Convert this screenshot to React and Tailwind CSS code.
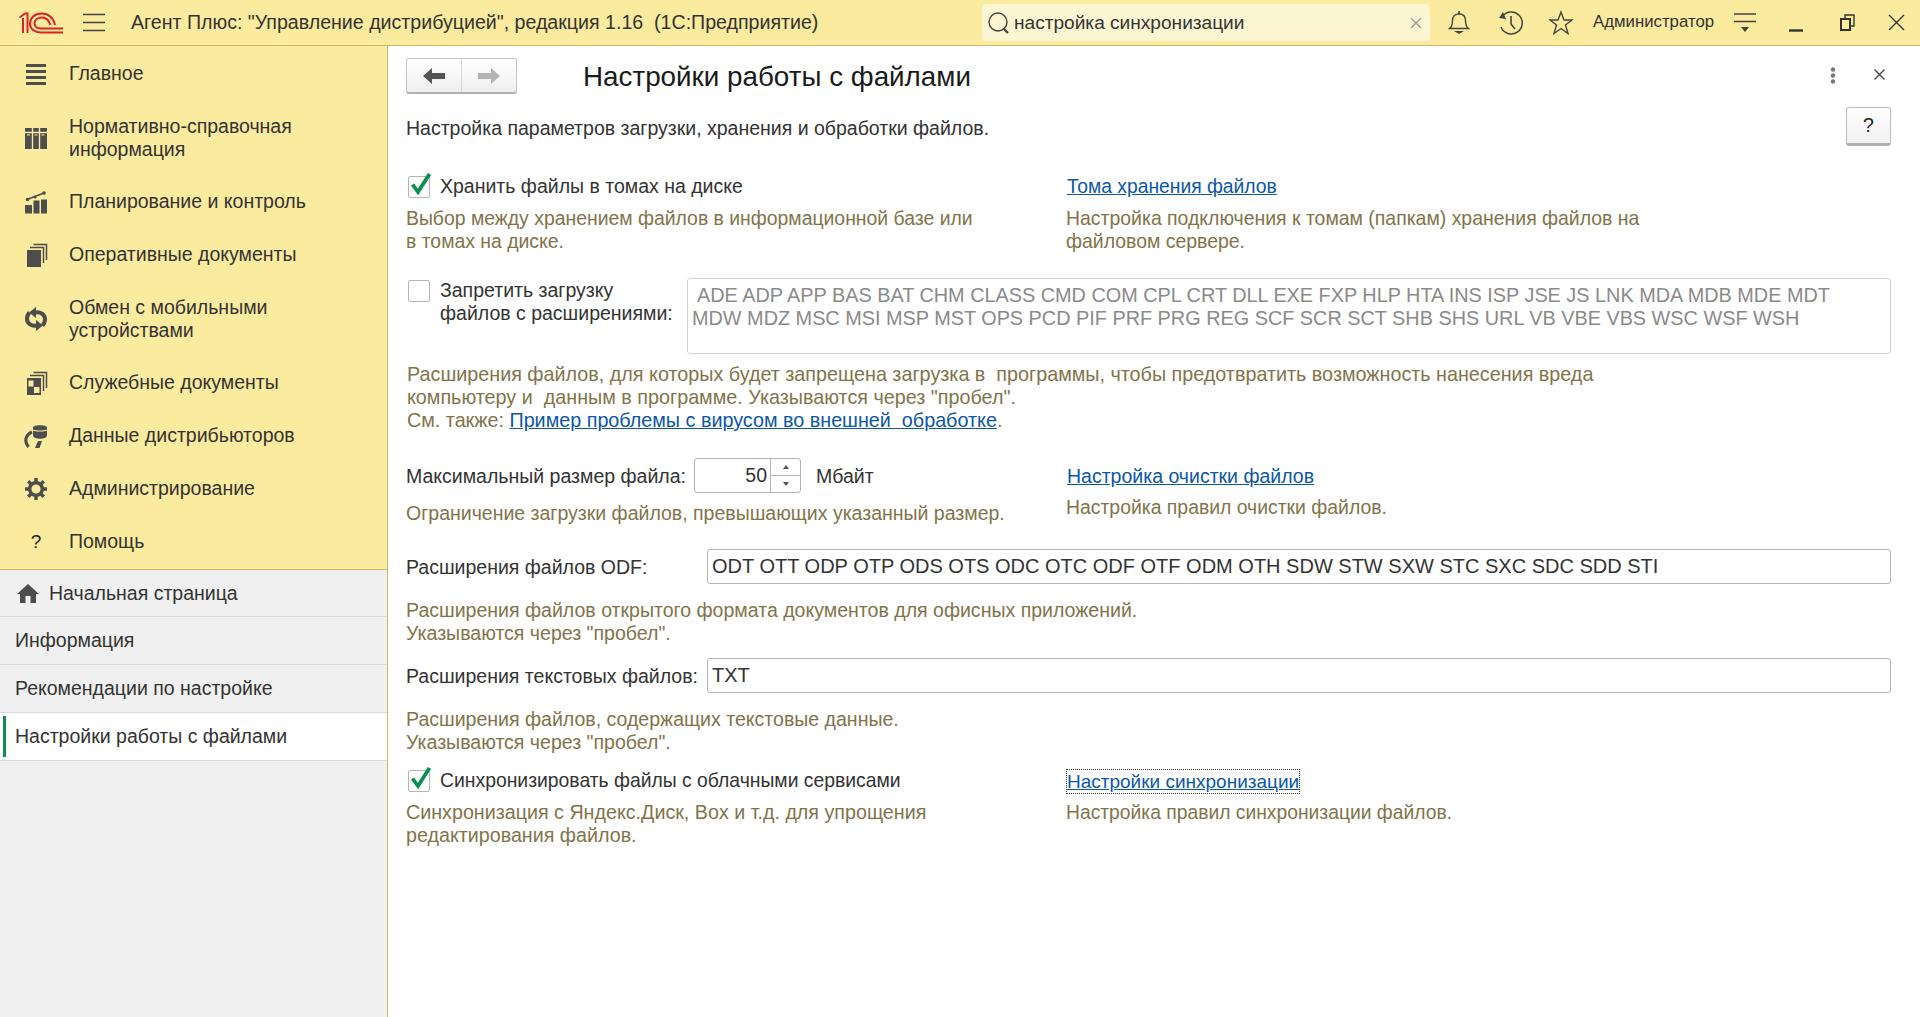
import React from "react";

const hintC = "text-[#81744a] leading-[23px]";
const hint = `${hintC} text-[19.4px]`;
const link = "text-[#0b57a8] underline";

function Check({ on }) {
  return (
    <div className="relative w-[22px] h-[22px] shrink-0 ml-[2px] mr-[10px] border border-[#b5b5b5] rounded-[2px] bg-white">
      {on && (
        <svg className="absolute -top-[4px] left-[1px]" width="24" height="24" viewBox="0 0 24 24">
          <path d="M2.500 11.500 L8 19 L19.500 1" fill="none" stroke="#0a8f4f" strokeWidth="3.800" />
        </svg>
      )}
    </div>
  );
}

const I = ({ children, w = 24, h = 24, c = "" }) => (
  <svg width={w} height={h} viewBox={`0 0 ${w} ${h}`} className={c} fill="none">
    {children}
  </svg>
);

const icons = {
  main: (
    <I>
      <path d="M2 3.500h20M2 9.500h20M2 15.500h20M2 21.500h20" stroke="#4d4d4d" strokeWidth="3" />
    </I>
  ),
  ref: (
    <I>
      <path d="M1 2h22v21H1z" fill="#4d4d4d" />
      <path d="M8.500 1v23M15.500 1v23M1 6.500h22" stroke="#fbeb9e" strokeWidth="1.400" />
      <path d="M3 9h3M10.500 9h3M17.500 9h3" stroke="#fbeb9e" strokeWidth="1" />
    </I>
  ),
  plan: (
    <I>
      <path d="M1 15h7v8.500H1zM9.500 10.500h6v13h-6zM17 9.500h6v14h-6z" fill="#4d4d4d" />
      <path d="M3 9.500 L20 3" stroke="#4d4d4d" strokeWidth="1.600" />
      <circle cx="3.500" cy="9.500" r="1.800" fill="#4d4d4d" />
      <circle cx="11" cy="7" r="1.500" fill="#4d4d4d" />
      <circle cx="20" cy="3" r="1.800" fill="#4d4d4d" />
    </I>
  ),
  docs: (
    <I>
      <path d="M3 7h14v17H3z" fill="#4d4d4d" />
      <path d="M6 4.500h13.500V20M9.500 1.500H22.500V17" stroke="#4d4d4d" strokeWidth="1.500" />
    </I>
  ),
  sync: (
    <I>
      <path d="M11 5.500C17 4.500 21 8 21 12c0 2.500-1 5-2.500 6.500" stroke="#4d4d4d" strokeWidth="4" />
      <path d="M13 18.500C7 19.500 3 16 3 12c0-2.500 1-5 2.500-6.500" stroke="#4d4d4d" strokeWidth="4" />
      <path d="M5 5.500L12 0v11zM19 18.500L12 13v11z" fill="#4d4d4d" />
    </I>
  ),
  service: (
    <I>
      <path d="M3 7h14v17H3z" fill="#4d4d4d" />
      <path d="M6 4.500h13.500V20M9.500 1.500H22.500V17" stroke="#4d4d4d" strokeWidth="1.500" />
      <path d="M4.500 9.500h5v6h-5zM10 16h5.500v6H10z" fill="#fbeb9e" />
    </I>
  ),
  dist: (
    <I>
      <path d="M9 3.500C9 .5 23 .5 23 3.500V11c0 2.800-3.500 3.800-7 3.800S9 13.800 9 11z" fill="#4d4d4d" />
      <path d="M9 6c2 1.300 12 1.300 14 0" stroke="#fbeb9e" strokeWidth="1.200" />
      <path d="M8 8C2 10.500-.5 17 4.500 23" stroke="#4d4d4d" strokeWidth="3.200" />
      <path d="M11 24l3-7h4l-2.500 7z" fill="#4d4d4d" />
    </I>
  ),
  gear: (
    <I>
      <circle cx="12" cy="12" r="6.300" stroke="#4d4d4d" strokeWidth="3.400" />
      <path
        d="M12 1v4M12 19v4M1 12h4M19 12h4M4.200 4.200l2.800 2.800M17 17l2.800 2.800M19.800 4.200L17 7M7 17l-2.800 2.800"
        stroke="#4d4d4d"
        strokeWidth="3.400"
      />
    </I>
  ),
};

const nav = [
  { t: ["Главное"], i: icons.main },
  { t: ["Нормативно-справочная", "информация"], i: icons.ref },
  { t: ["Планирование и контроль"], i: icons.plan },
  { t: ["Оперативные документы"], i: icons.docs },
  { t: ["Обмен с мобильными", "устройствами"], i: icons.sync },
  { t: ["Служебные документы"], i: icons.service },
  { t: ["Данные дистрибьюторов"], i: icons.dist },
  { t: ["Администрирование"], i: icons.gear },
  { t: ["Помощь"], i: <span className="block w-[24px] text-center text-[19px] text-[#222]">?</span> },
];

function Sidebar() {
  return (
    <aside className="w-[388px] shrink-0 flex flex-col bg-[#f0f0f0] border-r border-[#c8b865]">
      <nav className="bg-[#fbeb9e] pt-px pb-px border-b border-[#c8b865] text-[#333] h-[524px]">
        {nav.map((n) => (
          <div key={n.t[0]} className={`flex items-center ${n.t.length > 1 ? "h-[75px]" : "h-[53px]"}`}>
            <div className="w-[24px] ml-[24px] mr-[21px] flex justify-center shrink-0">{n.i}</div>
            <div>
              {n.t.map((l) => (
                <div key={l}>{l}</div>
              ))}
            </div>
          </div>
        ))}
      </nav>
      <div className="h-[47px] flex items-center border-b border-[#d9d9d9] text-[#333]">
        <svg className="ml-[17px] mr-[10px]" width="22" height="19" viewBox="0 0 22 19">
          <path d="M11 0 L22 10 H19 V19 H13.500 V12 H8.500 V19 H3 V10 H0 Z" fill="#4d4d4d" />
        </svg>
        Начальная страница
      </div>
      <div className="h-[48px] flex items-center pl-[15px] border-b border-[#d9d9d9] text-[#333]">Информация</div>
      <div className="h-[48px] flex items-center pl-[15px] border-b border-[#d9d9d9] text-[#333]">Рекомендации по настройке</div>
      <div className="relative h-[48px] flex items-center pl-[15px] border-b border-[#d9d9d9] text-[#333] bg-white">
        <span className="absolute left-[3px] top-[3px] w-[3px] h-[41px] bg-[#0a8f4f]" />
        Настройки работы с файлами
      </div>
    </aside>
  );
}

function Header() {
  return (
    <header className="h-[46px] shrink-0 flex items-center bg-[#fbeb9e] border-b border-[#c8b865] text-[#333]">
      <svg className="ml-[19px]" width="44" height="22" viewBox="0 0 44 22" fill="none">
        <path d="M0.500 5.500 L6 1.500 H8.500 V21 M4 6V21" stroke="#d8232a" strokeWidth="2" />
        <path d="M36 13 C34.500 5.500 29 1.500 23 1.500 C15.500 1.500 11 6 11 11.500 C11 17 15.500 20.500 22 20.500 H44" stroke="#d8232a" strokeWidth="2" />
        <path d="M31.500 13 C30 8.500 27 5.500 23 5.500 C18.500 5.500 15.500 8 15.500 11.500 C15.500 14.500 18.500 16.500 22 16.500 H44" stroke="#d8232a" strokeWidth="2" />
      </svg>
      <svg className="ml-[20px]" width="23" height="20" viewBox="0 0 23 20">
        <path d="M0 1.500h22M0 9.500h22M0 17.500h22" stroke="#444" strokeWidth="1.300" />
      </svg>
      <div className="ml-[25px] w-[851px] whitespace-pre text-[19.6px]">Агент Плюс: "Управление дистрибуцией", редакция 1.16  (1С:Предприятие)</div>
      <div className="w-[448px] h-[37px] rounded-[3px] bg-[#fdf6d3] flex items-center pl-[4px] pr-[8px]">
        <svg width="24" height="26" viewBox="0 0 24 26" fill="none">
          <circle cx="12" cy="12" r="9" stroke="#444" strokeWidth="1.400" />
          <path d="M18 19l4 4" stroke="#444" strokeWidth="2.400" />
        </svg>
        <span className="ml-[4px] flex-1 text-[19.1px]">настройка синхронизации</span>
        <svg width="12" height="12" viewBox="0 0 12 12">
          <path d="M1 1l10 10M11 1L1 11" stroke="#999" strokeWidth="1.300" />
        </svg>
      </div>
      <svg className="ml-[18px]" width="22" height="26" viewBox="0 0 22 26" fill="none">
        <path d="M1.500 18.500c3-2 3-5 3-8 0-4 2.500-6.500 6.500-6.500s6.500 2.500 6.500 6.500c0 3 0 6 3 8z" stroke="#444" strokeWidth="1.400" />
        <path d="M11 1v3" stroke="#444" strokeWidth="1.600" />
        <path d="M6 21h10l-5 3z" fill="#444" />
      </svg>
      <svg className="ml-[28px]" width="26" height="26" viewBox="0 0 26 26" fill="none">
        <path d="M4 7A11 11 0 1 1 3 17" stroke="#444" strokeWidth="1.500" />
        <path d="M1 8l7 1-3-7z" fill="#444" />
        <path d="M13 6v8l4 5" stroke="#444" strokeWidth="1.600" />
      </svg>
      <svg className="ml-[25px]" width="24" height="26" viewBox="0 0 24 26" fill="none">
        <path d="M12 2l3 8h8l-6.500 5 2.500 8.500-7-5-7 5L7.500 15 1 10h8z" stroke="#444" strokeWidth="1.400" />
      </svg>
      <div className="ml-[20px] w-[125px] text-[16.8px] whitespace-nowrap -mt-[3px]">Администратор</div>
      <svg className="ml-[16px]" width="22" height="20" viewBox="0 0 22 20">
        <path d="M0 1h22M0 8.500h22" stroke="#444" strokeWidth="1.300" />
        <path d="M7 14h8l-4 5z" fill="#444" />
      </svg>
      <svg className="ml-[33px] mt-[16px]" width="14" height="4" viewBox="0 0 14 4">
        <path d="M0 1.500h14" stroke="#333" strokeWidth="2.400" />
      </svg>
      <svg className="ml-[37px]" width="15" height="17" viewBox="0 0 15 17" fill="none">
        <path d="M1 5h9v11H1z" stroke="#333" strokeWidth="2" />
        <path d="M5 5V1h9v11h-4" stroke="#333" strokeWidth="1.400" />
      </svg>
      <svg className="ml-[33px]" width="17" height="17" viewBox="0 0 17 17">
        <path d="M1 1l15 15M16 1L1 16" stroke="#333" strokeWidth="1.400" />
      </svg>
    </header>
  );
}

function Field({ children }) {
  return (
    <div className="flex-1 h-[35px] border border-[#b4b4b4] rounded-[3px] flex items-center pl-[4px] bg-white text-[#333] text-[20px]">
      {children}
    </div>
  );
}

function Main() {
  return (
    <main className="flex-1 min-w-0 bg-white text-[#333] pl-[18px] pr-[29px] text-[19.5px]">
      <div className="flex items-start pt-[12px] h-[48px]">
        <div className="w-[111px] h-[36px] flex rounded-[3px] border border-[#c4c4c4] border-b-2 border-b-[#b0b0b0] bg-gradient-to-b from-white to-[#efefef]">
          <div className="w-[55px] flex items-center justify-center border-r border-[#d6d6d6]">
            <svg width="22" height="16" viewBox="0 0 22 16"><path d="M0 8L9 0V5H22V11H9V16Z" fill="#555" /></svg>
          </div>
          <div className="flex-1 flex items-center justify-center">
            <svg width="22" height="16" viewBox="0 0 22 16"><path d="M22 8L13 0V5H0V11H13V16Z" fill="#b3b3b3" /></svg>
          </div>
        </div>
        <h1 className="ml-[66px] text-[27.8px] leading-[37px] text-[#1a1a1a]">Настройки работы с файлами</h1>
        <svg className="ml-auto mt-[9px]" width="6" height="17" viewBox="0 0 6 17">
          <circle cx="3" cy="2.500" r="2.200" fill="#777" />
          <circle cx="3" cy="8.500" r="2.200" fill="#777" />
          <circle cx="3" cy="14.500" r="2.200" fill="#777" />
        </svg>
        <svg className="ml-[38px] mr-[6px] mt-[11px]" width="11" height="11" viewBox="0 0 11 11">
          <path d="M0.500 0.500l10 10M10.500 0.500l-10 10" stroke="#444" strokeWidth="1.300" />
        </svg>
      </div>

      <div className="flex items-start mt-[13px] h-[39px]">
        <p className="pt-[10px] text-[#333]">Настройка параметров загрузки, хранения и обработки файлов.</p>
        <button className="ml-auto w-[45px] h-[39px] border border-[#bdbdbd] border-b-[3px] border-b-[#b0b0b0] rounded-[3px] bg-gradient-to-b from-white to-[#f0f0f0] text-[#222] leading-none">?</button>
      </div>

      <div className="grid grid-cols-[660px_1fr] mt-[29px]">
        <div>
          <div className="flex items-center h-[23px]">
            <Check on />
            <span>Хранить файлы в томах на диске</span>
          </div>
          <p className={`${hint} mt-[9px]`}>Выбор между хранением файлов в информационной базе или<br />в томах на диске.</p>
        </div>
        <div>
          <a className={`${link} block h-[23px] pl-px text-[19.3px]`}>Тома хранения файлов</a>
          <p className={`${hintC} text-[19.45px] mt-[9px]`}>Настройка подключения к томам (папкам) хранения файлов на<br />файловом сервере.</p>
        </div>
      </div>

      <div className="flex mt-[25px]">
        <div className="w-[281px] shrink-0 flex items-start pt-px">
          <div className="mt-px"><Check /></div>
          <span className="text-[#333]">Запретить загрузку<br /><span className="whitespace-nowrap">файлов с расширениями:</span></span>
        </div>
        <div className="flex-1 h-[76px] border border-[#d2d2d2] rounded-[3px] text-[#8a8a8a] pt-[5px] pl-[4px] text-[19.85px] whitespace-nowrap">
          <div className="pl-[5px]">ADE ADP APP BAS BAT CHM CLASS CMD COM CPL CRT DLL EXE FXP HLP HTA INS ISP JSE JS LNK MDA MDB MDE MDT</div>
          <div>MDW MDZ MSC MSI MSP MST OPS PCD PIF PRF PRG REG SCF SCR SCT SHB SHS URL VB VBE VBS WSC WSF WSH</div>
        </div>
      </div>

      <p className={`${hintC} text-[19.75px] mt-[9px] pl-[1px] whitespace-pre`}>
        {"Расширения файлов, для которых будет запрещена загрузка в  программы, чтобы предотвратить возможность нанесения вреда"}
        <br />
        {"компьютеру и  данным в программе. Указываются через \"пробел\"."}
        <br />
        {"См. также: "}
        <a className={link}>{"Пример проблемы с вирусом во внешней  обработке"}</a>.
      </p>

      <div className="grid grid-cols-[660px_1fr] mt-[26px]">
        <div>
          <div className="flex items-center h-[35px]">
            <span className="w-[288px] shrink-0 pt-px">Максимальный размер файла:</span>
            <div className="w-[107px] h-[35px] border border-[#b4b4b4] rounded-[3px] flex">
              <div className="w-[75px] text-right pr-[3px] leading-[33px]">50</div>
              <div className="flex-1 flex flex-col border-l border-[#b4b4b4]">
                <div className="flex-1 flex items-center justify-center border-b border-[#b4b4b4]">
                  <svg width="6" height="4" viewBox="0 0 6 4"><path d="M3 0l3 4H0z" fill="#555" /></svg>
                </div>
                <div className="flex-1 flex items-center justify-center">
                  <svg width="6" height="4" viewBox="0 0 6 4"><path d="M3 4l3-4H0z" fill="#555" /></svg>
                </div>
              </div>
            </div>
            <span className="ml-[15px] pt-px">Мбайт</span>
          </div>
          <p className={`${hintC} text-[19.5px] mt-[9px]`}>Ограничение загрузки файлов, превышающих указанный размер.</p>
        </div>
        <div>
          <div className="h-[35px] flex items-center pl-px pt-px"><a className={link}>Настройка очистки файлов</a></div>
          <p className={`${hint} mt-[3px]`}>Настройка правил очистки файлов.</p>
        </div>
      </div>

      <div className="flex items-center mt-[24px]">
        <span className="w-[301px] shrink-0 pt-px">Расширения файлов ODF:</span>
        <Field>ODT OTT ODP OTP ODS OTS ODC OTC ODF OTF ODM OTH SDW STW SXW STC SXC SDC SDD STI</Field>
      </div>
      <p className={`${hintC} text-[19.55px] mt-[15px]`}>Расширения файлов открытого формата документов для офисных приложений.<br />Указываются через "пробел".</p>

      <div className="flex items-center mt-[13px]">
        <span className="w-[301px] shrink-0 pt-px">Расширения текстовых файлов:</span>
        <Field>TXT</Field>
      </div>
      <p className={`${hintC} text-[19.55px] mt-[15px]`}>Расширения файлов, содержащих текстовые данные.<br />Указываются через "пробел".</p>

      <div className="grid grid-cols-[660px_1fr] mt-[15px]">
        <div>
          <div className="flex items-center h-[23px]">
            <Check on />
            <span className="text-[19.35px]">Синхронизировать файлы с облачными сервисами</span>
          </div>
          <p className={`${hintC} text-[19.7px] mt-[9px]`}>Синхронизация с Яндекс.Диск, Box и т.д. для упрощения<br />редактирования файлов.</p>
        </div>
        <div>
          <a className={`${link} inline-block h-[25px] border border-dotted border-[#333] leading-[23px] text-[19px]`}>Настройки синхронизации</a>
          <p className={`${hintC} text-[19.3px] mt-[7px]`}>Настройка правил синхронизации файлов.</p>
        </div>
      </div>
    </main>
  );
}

export default function App() {
  return (
    <div className="w-[1920px] h-[1017px] flex flex-col overflow-hidden bg-white font-['Liberation_Sans',Arial,sans-serif] text-[19.5px] leading-[23px]">
      <Header />
      <div className="flex-1 flex min-h-0">
        <Sidebar />
        <Main />
      </div>
    </div>
  );
}
